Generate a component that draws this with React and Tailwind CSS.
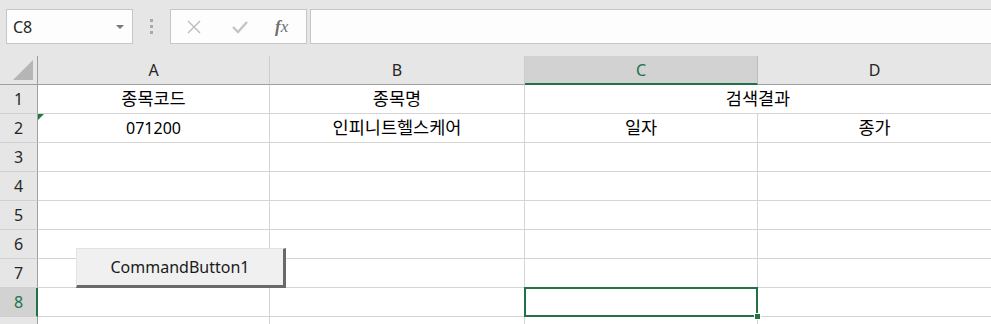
import React from "react";

const cols = [
  { key: "A", w: "w-[232px]" },
  { key: "B", w: "w-[255px]" },
  { key: "C", w: "w-[233px]" },
  { key: "D", w: "w-[234px]" },
];

const rows = [1, 2, 3, 4, 5, 6, 7, 8, 9];

const cellText = {
  "1-A": "종목코드",
  "1-B": "종목명",
  "2-A": "071200",
  "2-B": "인피니트헬스케어",
  "2-C": "일자",
  "2-D": "종가",
};

const Ko = ({ children }) => <span className="text-[17.5px]">{children}</span>;

const RowHeader = ({ n }) => {
  const active = n === 8;
  return (
    <div
      className={`w-[38px] h-[29px] shrink-0 flex items-center justify-center border-b border-b-[#d0d0d0] ${
        active
          ? "bg-[#d2d2d2] text-[#217346] border-r-2 border-r-[#217346]"
          : "bg-[#e6e6e6] text-[#262626] border-r border-r-[#9f9f9f]"
      }`}
    >
      {/* row 9 is cut by the window edge, its number sits below it */}
      {n < 9 && <span className={active ? "pl-[1px]" : ""}>{n}</span>}
    </div>
  );
};

const Cell = ({ w, children, selected, flag }) => (
  <div
    className={`${w} h-[29px] shrink-0 relative flex items-center justify-center bg-white border-r border-b border-[#d4d4d4] text-black`}
  >
    {flag && (
      <div className="absolute top-0 left-0 w-0 h-0 border-t-[6px] border-r-[6px] border-t-[#1e7a3c] border-r-transparent" />
    )}
    {children}
    {selected && (
      <div className="absolute z-10 left-[-1px] top-[-1px] right-[-1px] bottom-[-1px] border-2 border-[#217346]">
        <div className="absolute right-[-5px] bottom-[-5px] w-[7px] h-[7px] bg-[#217346] border border-white" />
      </div>
    )}
  </div>
);

export default function App() {
  return (
    <div
      className="w-[991px] h-[324px] overflow-hidden bg-[#e6e6e6] text-[16px] leading-none"
      style={{ fontFamily: '"Noto Sans", "Noto Sans CJK KR", sans-serif' }}
    >
      {/* formula bar */}
      <div className="h-[56px] pt-[9px] flex items-start">
        <div className="ml-[6px] w-[127px] h-[35px] bg-[#fdfdfd] border border-[#c6c6c6] flex items-center justify-between pl-[6px] pr-[8px] text-[#262626]">
          <span className="text-[16px]">C8</span>
          <span className="w-0 h-0 border-l-[4px] border-r-[4px] border-t-[4px] border-l-transparent border-r-transparent border-t-[#777]" />
        </div>
        <div className="w-[37px] h-[35px] flex flex-col items-center justify-center gap-[3px]">
          <span className="w-[3px] h-[3px] bg-[#a9a9a9]" />
          <span className="w-[3px] h-[3px] bg-[#a9a9a9]" />
          <span className="w-[3px] h-[3px] bg-[#a9a9a9]" />
        </div>
        <div className="w-[137px] h-[35px] bg-[#fdfdfd] border border-[#c6c6c6] flex items-center">
          <svg className="ml-[15px]" width="16" height="16" viewBox="0 0 16 16">
            <path d="M2 2 L14 14 M14 2 L2 14" stroke="#bcbcbc" strokeWidth="1.4" fill="none" />
          </svg>
          <svg className="ml-[29px]" width="18" height="16" viewBox="0 0 18 16">
            <path d="M2 8 L7 13 L16 3" stroke="#c4c4c4" strokeWidth="2.4" fill="none" />
          </svg>
          <span
            className="ml-[26px] text-[17px] italic text-[#6e6e6e]"
            style={{ fontFamily: '"Liberation Serif", serif' }}
          >
            <span className="font-bold">f</span>x
          </span>
        </div>
        <div className="ml-[3px] flex-1 h-[35px] bg-[#fdfdfd] border border-r-0 border-[#c6c6c6]" />
      </div>

      {/* grid */}
      <div className="relative">
        <div className="flex h-[29px]">
          <div className="w-[38px] h-[29px] shrink-0 bg-[#e6e6e6] border-r border-b border-[#9f9f9f] relative">
            <div className="absolute left-[13px] top-[4px] w-0 h-0 border-b-[20px] border-l-[20px] border-b-[#b5b5b5] border-l-transparent" />
          </div>
          {cols.map((c) => {
            const active = c.key === "C";
            return (
              <div
                key={c.key}
                className={`${c.w} h-[29px] shrink-0 flex items-center justify-center border-r ${
                  active
                    ? "bg-[#d2d2d2] text-[#217346] border-b-2 border-b-[#217346] border-r-[#bdbdbd]"
                    : "bg-[#e6e6e6] text-[#262626] border-b border-b-[#9f9f9f] border-r-[#cbcbcb]"
                }`}
              >
                {c.key}
              </div>
            );
          })}
        </div>

        {rows.map((r) => (
          <div key={r} className="flex h-[29px]">
            <RowHeader n={r} />
            {r === 1 ? (
              <>
                <Cell w={cols[0].w}><Ko>{cellText["1-A"]}</Ko></Cell>
                <Cell w={cols[1].w}><Ko>{cellText["1-B"]}</Ko></Cell>
                <Cell w="w-[467px]"><Ko>검색결과</Ko></Cell>
              </>
            ) : (
              cols.map((c) => {
                const t = cellText[`${r}-${c.key}`];
                return (
                  <Cell
                    key={c.key}
                    w={c.w}
                    flag={r === 2 && c.key === "A"}
                    selected={r === 8 && c.key === "C"}
                  >
                    {t && /[가-힣]/.test(t) ? <Ko>{t}</Ko> : t}
                  </Cell>
                );
              })
            )}
          </div>
        ))}

        {/* ActiveX command button */}
        <div className="absolute left-[76px] top-[192px] w-[210px] h-[40px] bg-[#f0f0f0] border-t border-l border-[#e3e3e3] border-r-[3px] border-b-[3px] border-r-[#696969] border-b-[#696969] flex items-center justify-center text-[#1a1a1a]">
          CommandButton1
        </div>
      </div>
    </div>
  );
}
